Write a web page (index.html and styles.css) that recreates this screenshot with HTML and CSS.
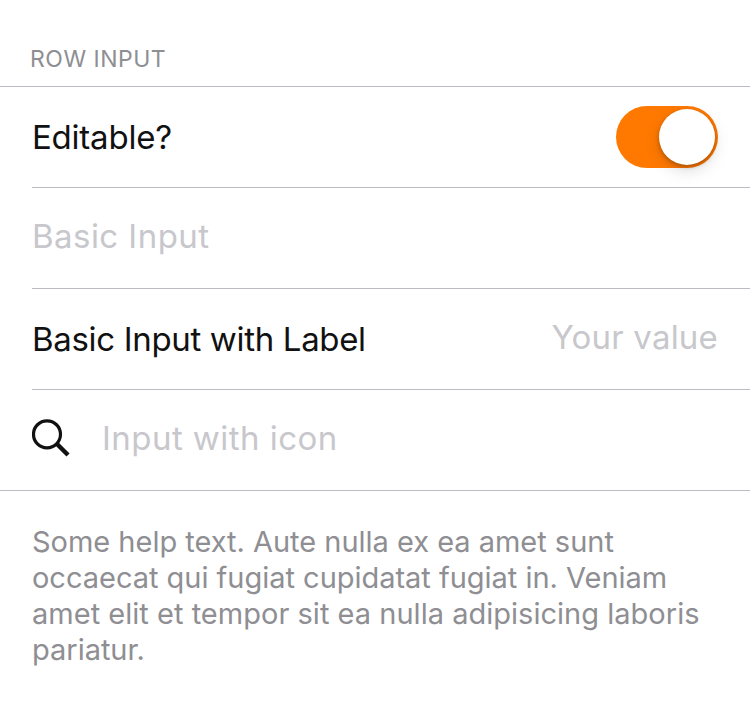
FILE: index.html
```html
<!DOCTYPE html>
<html lang="en">
<head>
<meta charset="utf-8">
<title>Row Input</title>
<link rel="stylesheet" href="styles.css">
</head>
<body>
<main class="section">
  <h2 class="header">ROW INPUT</h2>
  <div class="rows">
    <div class="row"><span class="label">Editable?</span><span class="switch"><span class="knob"></span></span></div>
    <div class="row"><span class="placeholder">Basic Input</span></div>
    <div class="row"><span class="label label-long">Basic Input with Label</span><span class="placeholder value">Your value</span></div>
    <div class="row"><svg class="icon" viewBox="0 0 38 38"><circle cx="15" cy="15.3" r="13.5"/><path class="handle" d="M24.5 24.5L36 36"/></svg><span class="placeholder">Input with icon</span></div>
  </div>
  <p class="help"><span>Some help text. Aute nulla ex ea amet sunt</span><br><span>occaecat qui fugiat cupidatat fugiat in. Veniam</span><br><span class="wide">amet elit et tempor sit ea nulla adipisicing laboris</span><br><span>pariatur.</span></p>
</main>
</body>
</html>
```
FILE: styles.css
```css
* { box-sizing: border-box; }
body { margin: 0; background: #fff; font-family: Inter, "Liberation Sans", sans-serif; }
.header { margin: 0; height: 86px; padding: 44px 0 0 30px; font-size: 23px; line-height: 30px; font-weight: 400; letter-spacing: .5px; color: #8e8e93; }
.rows { border-top: 1px solid #bcbbc1; border-bottom: 1px solid #bcbbc1; padding-left: 32px; }
.row { display: flex; align-items: center; height: 101px; border-bottom: 1px solid #bcbbc1; padding-right: 32px; font-size: 33px; line-height: 40px; white-space: nowrap; }
.row:last-child { height: 100px; border-bottom: 0; }
.label { color: #111; letter-spacing: -.22px; }
.label-long { letter-spacing: -.33px; }
.placeholder { color: #c7c7cc; letter-spacing: .45px; margin-bottom: 4px; }
.value { margin-left: auto; letter-spacing: .2px; }
.switch { margin-left: auto; width: 102px; height: 62px; border-radius: 31px; background: #ff7900; padding: 3px; display: flex; justify-content: flex-end; }
.knob { width: 56px; height: 56px; border-radius: 50%; background: #fff; box-shadow: 0 6px 16px rgba(0,0,0,.13), 0 2px 4px rgba(0,0,0,.25); }
.icon { width: 38px; height: 38px; margin: 0 32px 4px 0; fill: none; stroke: #111; stroke-width: 3.2; }
.handle { stroke-width: 4.4; }
.help { margin: 0; padding: 33px 32px; font-size: 29px; line-height: 36px; letter-spacing: -.02px; color: #8e8e93; white-space: nowrap; }
.wide { letter-spacing: .02px; }
```
